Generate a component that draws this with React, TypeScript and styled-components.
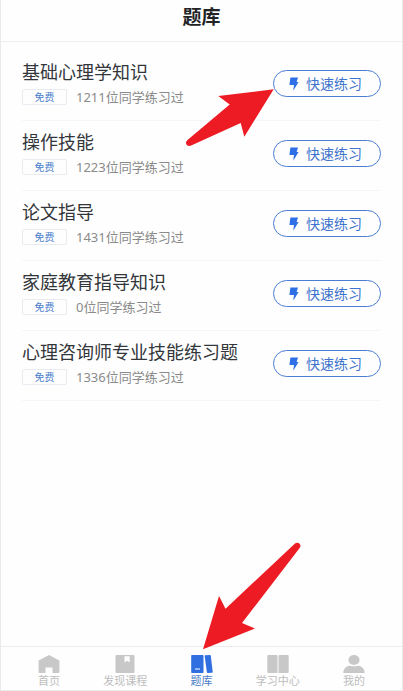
import React from "react";
import styled, { createGlobalStyle } from "styled-components";

const GlobalStyle = createGlobalStyle`
  *, *::before, *::after { box-sizing: border-box; }
  body {
    margin: 0;
    background: #fefefe;
    font-family: "Noto Sans", "Noto Sans CJK SC", sans-serif;
  }
`;

const Screen = styled.div`
  min-height: 100vh;
  display: flex;
  flex-direction: column;
  border: 1px solid #e9eaeb;
  border-top: 0;
`;

const Header = styled.header`
  height: 42px;
  padding-bottom: 7px;
  display: flex;
  align-items: center;
  justify-content: center;
  border-bottom: 1px solid #eceeef;
`;

const PageTitle = styled.h1`
  margin: 0;
  font-size: 19px;
  line-height: 24px;
  font-weight: 700;
  color: #222426;
`;

const Main = styled.main`
  flex: 1;
  position: relative;
  padding: 9px 21px 0;
`;

const BankList = styled.ul`
  margin: 0;
  padding: 0;
  list-style: none;
`;

const BankRow = styled.li`
  display: flex;
  align-items: center;
  justify-content: space-between;
  padding: 11px 0 15px;
  border-bottom: 1px solid #f6f6f6;
`;

const BankInfo = styled.div`
  display: flex;
  flex-direction: column;
  gap: 7px;
`;

const BankName = styled.h2`
  margin: 0;
  font-size: 18px;
  line-height: 20px;
  font-weight: 400;
  color: #32363b;
`;

const Meta = styled.div`
  display: flex;
  align-items: center;
  gap: 9px;
  height: 16px;
`;

const Tag = styled.span`
  width: 45px;
  height: 16px;
  display: flex;
  align-items: center;
  justify-content: center;
  border: 1px solid #e8ecf0;
  border-radius: 2px;
  font-size: 10px;
  line-height: 14px;
  color: #4a80cc;
`;

const Learners = styled.span`
  font-size: 13px;
  line-height: 16px;
  color: #8a8a8a;
`;

const PracticeButton = styled.button`
  flex: none;
  width: 108px;
  height: 27px;
  padding: 0 3px 0 0;
  display: flex;
  align-items: center;
  justify-content: center;
  gap: 7px;
  border: 1px solid #4a7dd2;
  border-radius: 14px;
  background: transparent;
  font-family: inherit;
  font-size: 14px;
  line-height: 20px;
  color: #3f74cc;
  cursor: pointer;
`;

const TabBar = styled.nav`
  position: relative;
  height: 44px;
  padding: 8px 10px 0;
  display: flex;
  border-top: 1px solid #ededed;
`;

const Tab = styled.a<{ $active: boolean }>`
  flex: 1;
  display: flex;
  flex-direction: column;
  align-items: center;
  font-size: 11px;
  line-height: 16px;
  white-space: nowrap;
  text-decoration: none;
  color: ${(p) => (p.$active ? "#4a7cc8" : "#bdbdbd")};

  svg {
    color: ${(p) => (p.$active ? "#2f6fe0" : "#c8c8c8")};
  }
`;

const ButtonPointer = styled.svg`
  position: absolute;
  top: 46px;
  right: 126px;
  pointer-events: none;
`;

const TabPointer = styled.svg`
  position: absolute;
  left: 50%;
  bottom: 40px;
  pointer-events: none;
`;

const Bolt = () => (
  <svg width="10" height="14" viewBox="0 0 10 14" fill="#2f6fe6" aria-hidden="true">
    <path d="M1.400 .4h7.600L7.600 4.900h2L4.200 13.800l.8-5.900H.4z" />
  </svg>
);

const icons: Record<string, React.ReactNode> = {
  home: <path d="M11 0 21.400 5.600V17a1 1 0 0 1-1 1H14.500v-5.500h-7V18H1.600a1 1 0 0 1-1-1V5.600z" />,
  course: (
    <path
      fillRule="evenodd"
      d="M2.500 0h17a1 1 0 0 1 1 1v16a1 1 0 0 1-1 1h-17a1 1 0 0 1-1-1V1a1 1 0 0 1 1-1zM10.500 1.200v6.200l2.600-1.700 2.600 1.700V1.200z"
    />
  ),
  bank: (
    <>
      <path
        fillRule="evenodd"
        d="M1 0h10.700a.8.800 0 0 1 .8.800V17.200a.8.800 0 0 1-.8.800H1a.8.800 0 0 1-.8-.8V.8A.8.800 0 0 1 1 0zM4 13.400v1.200h5v-1.200z"
      />
      <path d="M14.300.3 19 0a.8.800 0 0 1 .8.700L21.700 16.800a.8.800 0 0 1-.7.900L16.700 18a.8.800 0 0 1-.8-.7L13.700 1.200a.8.800 0 0 1 .6-.9z" />
    </>
  ),
  study: (
    <>
      <path d="M1.300 0h8.200a1 1 0 0 1 1 1v17H1.300a1 1 0 0 1-1-1V1a1 1 0 0 1 1-1z" />
      <path d="M12.500 0h8.200a1 1 0 0 1 1 1v16a1 1 0 0 1-1 1h-9.200V1a1 1 0 0 1 1-1z" />
    </>
  ),
  mine: (
    <>
      <ellipse cx="11" cy="5" rx="5.600" ry="5" />
      <path d="M.3 18c0-4.500 3.400-7.200 7.200-7.200 1.200.7 5.800.7 7 0 3.800 0 7.200 2.700 7.200 7.200z" />
    </>
  ),
};

const banks = [
  { name: "基础心理学知识", learners: 1211 },
  { name: "操作技能", learners: 1223 },
  { name: "论文指导", learners: 1431 },
  { name: "家庭教育指导知识", learners: 0 },
  { name: "心理咨询师专业技能练习题", learners: 1336 },
];

const tabs = [
  { id: "home", label: "首页" },
  { id: "course", label: "发现课程" },
  { id: "bank", label: "题库" },
  { id: "study", label: "学习中心" },
  { id: "mine", label: "我的" },
];

export default function App() {
  return (
    <Screen>
      <GlobalStyle />
      <Header>
        <PageTitle>题库</PageTitle>
      </Header>
      <Main>
        <BankList>
          {banks.map((bank) => (
            <BankRow key={bank.name}>
              <BankInfo>
                <BankName>{bank.name}</BankName>
                <Meta>
                  <Tag>免费</Tag>
                  <Learners>{bank.learners}位同学练习过</Learners>
                </Meta>
              </BankInfo>
              <PracticeButton type="button">
                <Bolt />
                快速练习
              </PracticeButton>
            </BankRow>
          ))}
        </BankList>
        <ButtonPointer width="90" height="60" viewBox="0 0 90 60" fill="#ed1c24" aria-hidden="true">
          <path d="M87.700 1.300 32.300 8l11.400 8.500L1.200 52.200c-3 3.200 0 7 4 5.400L54.700 35l3.600 13.700z" />
        </ButtonPointer>
      </Main>
      <TabBar>
        {tabs.map((tab) => (
          <Tab
            key={tab.id}
            href={`#${tab.id}`}
            $active={tab.id === "bank"}
            aria-current={tab.id === "bank" ? "page" : undefined}
          >
            <svg width="22" height="18" viewBox="0 0 22 18" fill="currentColor" aria-hidden="true">
              {icons[tab.id]}
            </svg>
            {tab.label}
          </Tab>
        ))}
        <TabPointer width="100" height="108" viewBox="0 0 100 108" fill="#ed1c24" aria-hidden="true">
          <path d="M1 107.300 17 54l6.500 12.700L93 1.400c3.200-2.200 6.800.8 5 4.200L40 81l13 5.400z" />
        </TabPointer>
      </TabBar>
    </Screen>
  );
}
